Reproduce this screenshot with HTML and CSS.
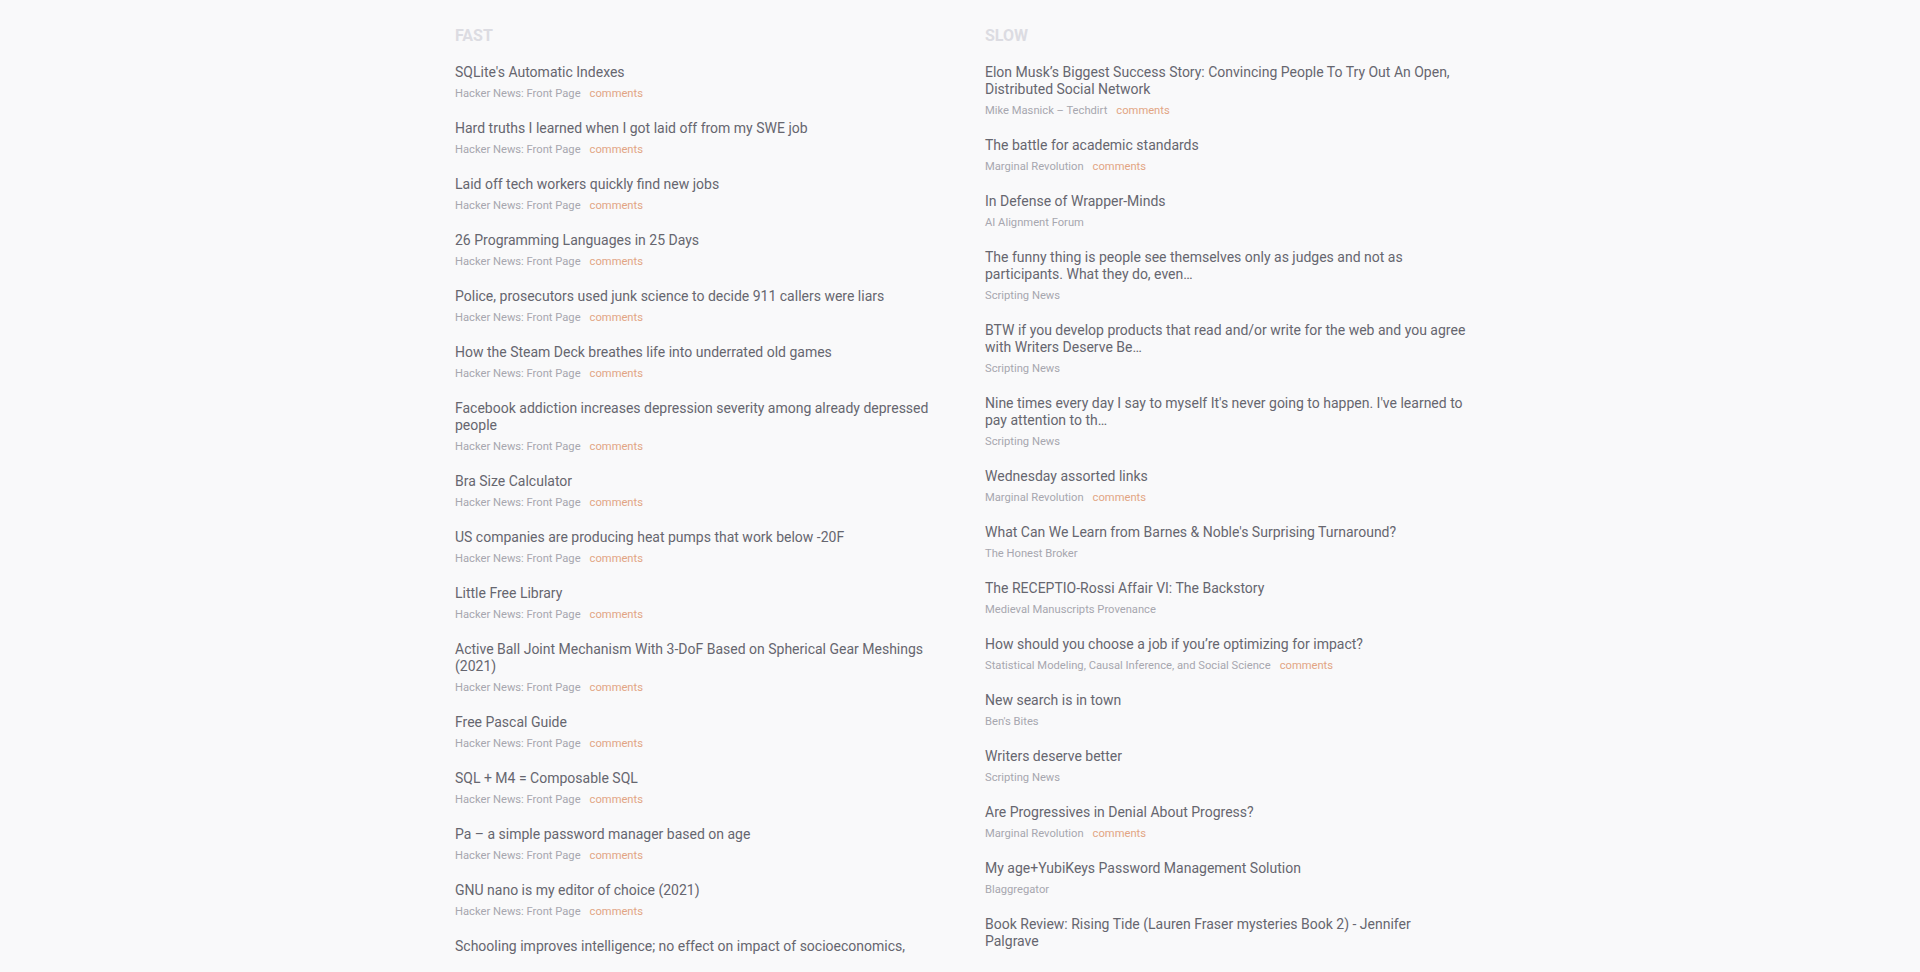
FILE: index.html
```html
<!DOCTYPE html>
<html lang="en">
<head>
<meta charset="utf-8">
<title>Feeds</title>
<link rel="stylesheet" href="styles.css">
</head>
<body>
<main class="page">
  <section class="col">
    <h2 class="col-head">FAST</h2>
    <ul class="list">
      <li class="item"><a class="title" href="#">SQLite's Automatic Indexes</a><div class="meta"><span class="src">Hacker News: Front Page</span><a class="cmt" href="#">comments</a></div></li>
      <li class="item"><a class="title" href="#">Hard truths I learned when I got laid off from my SWE job</a><div class="meta"><span class="src">Hacker News: Front Page</span><a class="cmt" href="#">comments</a></div></li>
      <li class="item"><a class="title" href="#">Laid off tech workers quickly find new jobs</a><div class="meta"><span class="src">Hacker News: Front Page</span><a class="cmt" href="#">comments</a></div></li>
      <li class="item"><a class="title" href="#">26 Programming Languages in 25 Days</a><div class="meta"><span class="src">Hacker News: Front Page</span><a class="cmt" href="#">comments</a></div></li>
      <li class="item"><a class="title" href="#">Police, prosecutors used junk science to decide 911 callers were liars</a><div class="meta"><span class="src">Hacker News: Front Page</span><a class="cmt" href="#">comments</a></div></li>
      <li class="item"><a class="title" href="#">How the Steam Deck breathes life into underrated old games</a><div class="meta"><span class="src">Hacker News: Front Page</span><a class="cmt" href="#">comments</a></div></li>
      <li class="item"><a class="title" href="#">Facebook addiction increases depression severity among already depressed people</a><div class="meta"><span class="src">Hacker News: Front Page</span><a class="cmt" href="#">comments</a></div></li>
      <li class="item"><a class="title" href="#">Bra Size Calculator</a><div class="meta"><span class="src">Hacker News: Front Page</span><a class="cmt" href="#">comments</a></div></li>
      <li class="item"><a class="title" href="#">US companies are producing heat pumps that work below -20F</a><div class="meta"><span class="src">Hacker News: Front Page</span><a class="cmt" href="#">comments</a></div></li>
      <li class="item"><a class="title" href="#">Little Free Library</a><div class="meta"><span class="src">Hacker News: Front Page</span><a class="cmt" href="#">comments</a></div></li>
      <li class="item"><a class="title" href="#">Active Ball Joint Mechanism With 3-DoF Based on Spherical Gear Meshings (2021)</a><div class="meta"><span class="src">Hacker News: Front Page</span><a class="cmt" href="#">comments</a></div></li>
      <li class="item"><a class="title" href="#">Free Pascal Guide</a><div class="meta"><span class="src">Hacker News: Front Page</span><a class="cmt" href="#">comments</a></div></li>
      <li class="item"><a class="title" href="#">SQL + M4 = Composable SQL</a><div class="meta"><span class="src">Hacker News: Front Page</span><a class="cmt" href="#">comments</a></div></li>
      <li class="item"><a class="title" href="#">Pa – a simple password manager based on age</a><div class="meta"><span class="src">Hacker News: Front Page</span><a class="cmt" href="#">comments</a></div></li>
      <li class="item"><a class="title" href="#">GNU nano is my editor of choice (2021)</a><div class="meta"><span class="src">Hacker News: Front Page</span><a class="cmt" href="#">comments</a></div></li>
      <li class="item"><a class="title" href="#">Schooling improves intelligence; no effect on impact of socioeconomics,</a></li>
    </ul>
  </section>
  <section class="col">
    <h2 class="col-head">SLOW</h2>
    <ul class="list">
      <li class="item"><a class="title" href="#">Elon Musk’s Biggest Success Story: Convincing People To Try Out An Open, Distributed Social Network</a><div class="meta"><span class="src">Mike Masnick – Techdirt</span><a class="cmt" href="#">comments</a></div></li>
      <li class="item"><a class="title" href="#">The battle for academic standards</a><div class="meta"><span class="src">Marginal Revolution</span><a class="cmt" href="#">comments</a></div></li>
      <li class="item"><a class="title" href="#">In Defense of Wrapper-Minds</a><div class="meta"><span class="src">AI Alignment Forum</span></div></li>
      <li class="item"><a class="title" href="#">The funny thing is people see themselves only as judges and not as participants. What they do, even…</a><div class="meta"><span class="src">Scripting News</span></div></li>
      <li class="item"><a class="title" href="#">BTW if you develop products that read and/or write for the web and you agree with Writers Deserve Be…</a><div class="meta"><span class="src">Scripting News</span></div></li>
      <li class="item"><a class="title" href="#">Nine times every day I say to myself It's never going to happen. I've learned to pay attention to th…</a><div class="meta"><span class="src">Scripting News</span></div></li>
      <li class="item"><a class="title" href="#">Wednesday assorted links</a><div class="meta"><span class="src">Marginal Revolution</span><a class="cmt" href="#">comments</a></div></li>
      <li class="item"><a class="title" href="#">What Can We Learn from Barnes &amp; Noble's Surprising Turnaround?</a><div class="meta"><span class="src">The Honest Broker</span></div></li>
      <li class="item"><a class="title" href="#">The RECEPTIO-Rossi Affair VI: The Backstory</a><div class="meta"><span class="src">Medieval Manuscripts Provenance</span></div></li>
      <li class="item"><a class="title" href="#">How should you choose a job if you’re optimizing for impact?</a><div class="meta"><span class="src">Statistical Modeling, Causal Inference, and Social Science</span><a class="cmt" href="#">comments</a></div></li>
      <li class="item"><a class="title" href="#">New search is in town</a><div class="meta"><span class="src">Ben's Bites</span></div></li>
      <li class="item"><a class="title" href="#">Writers deserve better</a><div class="meta"><span class="src">Scripting News</span></div></li>
      <li class="item"><a class="title" href="#">Are Progressives in Denial About Progress?</a><div class="meta"><span class="src">Marginal Revolution</span><a class="cmt" href="#">comments</a></div></li>
      <li class="item"><a class="title" href="#">My age+YubiKeys Password Management Solution</a><div class="meta"><span class="src">Blaggregator</span></div></li>
      <li class="item"><a class="title" href="#">Book Review: Rising Tide (Lauren Fraser mysteries Book 2) - Jennifer Palgrave</a></li>
    </ul>
  </section>
</main>
</body>
</html>
```

FILE: styles.css
```css
html, body {
  margin: 0;
  padding: 0;
  background: #f9f9fa;
  font-family: Roboto, "Liberation Sans", sans-serif;
  overflow: hidden;
  height: 972px;
}

.page {
  width: 1012px;
  margin-left: calc(50% - 505px);
  padding-top: 26px;
  display: grid;
  grid-template-columns: 1fr 1fr;
  column-gap: 48px;
  align-items: start;
}

.col-head {
  margin: 0 0 18px 0;
  font-size: 16px;
  line-height: 20px;
  font-weight: 700;
  color: #dcdce2;
}

.list {
  list-style: none;
  margin: 0;
  padding: 0;
}

.item {
  margin: 0 0 20px 0;
}

.title {
  display: block;
  font-size: 14px;
  line-height: 17px;
  color: #66666f;
  text-decoration: none;
}

.meta {
  margin-top: 6px;
  display: flex;
  gap: 9px;
  font-size: 11.2px;
  line-height: 13px;
}

.src {
  color: #a7a7af;
}

.cmt {
  color: #e2a584;
  text-decoration: none;
}
```
